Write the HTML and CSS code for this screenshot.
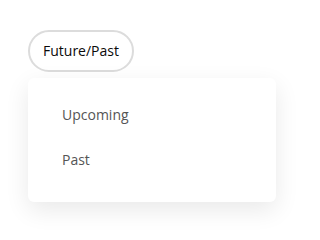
FILE: index.html
```html
<!DOCTYPE html>
<html>
<head>
<meta charset="utf-8">
<link rel="stylesheet" href="styles.css">
</head>
<body>
<div class="wrap">
  <button class="toggle">Future/Past</button>
  <ul class="menu">
    <li class="item">Upcoming</li>
    <li class="item">Past</li>
  </ul>
</div>
</body>
</html>
```
FILE: styles.css
```css
html, body {
  margin: 0;
  padding: 0;
  background: #fff;
}
.wrap {
  padding: 30px 29px 30px 28px;
  font-family: "Open Sans", sans-serif;
  display: flex;
  flex-direction: column;
  align-items: flex-start;
}
.toggle {
  height: 42px;
  padding: 0 13px;
  border: 2px solid #dcdcdc;
  border-radius: 21px;
  background: #fff;
  font-family: "Open Sans", sans-serif;
  font-size: 14px;
  color: #0a0a0a;
  line-height: 20px;
}
.menu {
  list-style: none;
  margin: 6px 0 0 0;
  padding: 14px 0 20px 0;
  width: 248px;
  background: #fff;
  border-radius: 6px;
  box-shadow: 0 8px 24px rgba(0, 0, 0, 0.09);
}
.item {
  padding: 12px 34px;
  font-size: 14px;
  line-height: 21px;
  color: #555;
}
```
